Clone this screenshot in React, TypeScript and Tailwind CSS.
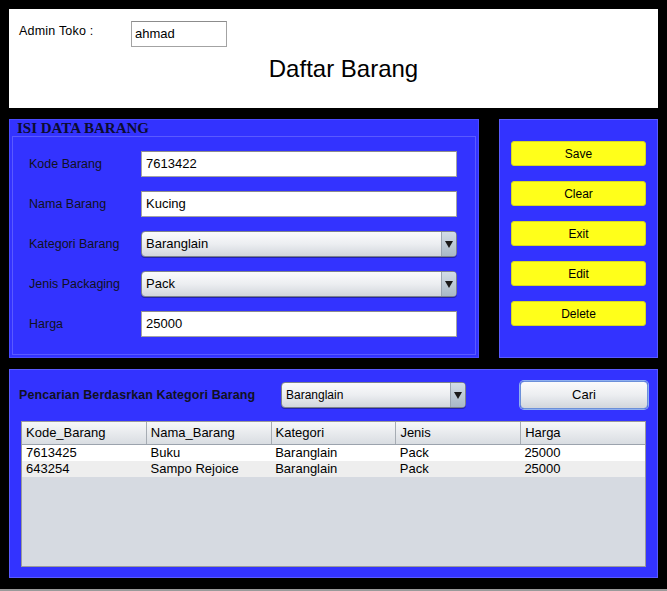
import React from 'react';

const sans = "font-['Liberation_Sans',Arial,sans-serif]";

function TextField({ value, className = '' }: { value: string; className?: string }) {
  return (
    <div
      className={`h-[26px] bg-white border border-[#a3a3a3] border-t-[#8c8c8c] flex items-center px-[4px] text-[13px] text-black ${className}`}
    >
      {value}
    </div>
  );
}

function Combo({ value, className = '', small = false }: { value: string; className?: string; small?: boolean }) {
  return (
    <div
      className={`h-[26px] shrink-0 flex rounded-[4px] border border-[#7d838c] overflow-hidden bg-gradient-to-b from-[#fbfbfc] via-[#eceef1] to-[#d2d6dc] shadow-[0_1px_0_#2222aa] ${className}`}
    >
      <div className={`flex-1 flex items-center px-[4px] text-black ${small ? 'text-[12px]' : 'text-[13px]'}`}>{value}</div>
      <div className="w-[15px] flex items-center justify-center border-l border-[#9aa5b1] bg-gradient-to-b from-[#d3dde7] to-[#a9b8c6]">
        <svg width="8" height="7" viewBox="0 0 8 7">
          <path d="M0 0 H8 L4 7 Z" fill="#1a1a1a" />
        </svg>
      </div>
    </div>
  );
}

function YellowButton({ label }: { label: string }) {
  return (
    <div className="h-[25px] w-[135px] rounded-[3px] bg-[#ffff1a] border border-[#d8d820] flex items-center justify-center text-[12px] leading-[14px] pt-[1px] text-black">
      {label}
    </div>
  );
}

const rows = [
  ['7613425', 'Buku', 'Baranglain', 'Pack', '25000'],
  ['643254', 'Sampo Rejoice', 'Baranglain', 'Pack', '25000'],
];

const headers = ['Kode_Barang', 'Nama_Barang', 'Kategori', 'Jenis', 'Harga'];

const fields: { label: string; value: string; combo?: boolean }[] = [
  { label: 'Kode Barang', value: '7613422' },
  { label: 'Nama Barang', value: 'Kucing' },
  { label: 'Kategori Barang', value: 'Baranglain', combo: true },
  { label: 'Jenis Packaging', value: 'Pack', combo: true },
  { label: 'Harga', value: '25000' },
];

export default function App() {
  return (
    <div className={`w-[667px] h-[591px] bg-black flex flex-col ${sans}`}>
      <div className="px-[9px] pt-[9px] flex flex-col gap-[11px]">
        {/* header */}
        <div className="h-[99px] bg-white flex flex-col">
          <div className="flex items-start pt-[12px]">
            <div className="ml-[10px] mt-[1px] text-[12.5px] text-black w-[112px] tracking-[0.2px]">Admin Toko :</div>
            <div className="h-[26px] w-[96px] border border-[#a3a3a3] border-t-[#8c8c8c] flex items-center px-[3px] text-[13px] text-black">
              ahmad
            </div>
          </div>
          <div className="text-[24px] text-black text-center mt-[8px] pl-[20px] leading-[28px]">Daftar Barang</div>
        </div>

        {/* form + buttons */}
        <div className="h-[239px] flex gap-[20px]">
          <div className="w-[470px] bg-[#3333ff] border border-[#4b4bff] flex flex-col px-[2px] pb-[2px]">
            <div className="h-[16px] pl-[5px] font-['Liberation_Serif',serif] font-bold text-[15px] leading-[17px] text-[#0c0c30]">
              ISI DATA BARANG
            </div>
            <div className="flex-1 border border-[#5a5aff] flex flex-col gap-[14px] pt-[14px] pl-[16px]">
              {fields.map((f) => (
                <div key={f.label} className="flex items-center h-[26px]">
                  <div className="w-[112px] text-[12.5px] text-[#111122]">{f.label}</div>
                  {f.combo ? (
                    <Combo value={f.value} className="w-[316px]" />
                  ) : (
                    <TextField value={f.value} className="w-[316px]" />
                  )}
                </div>
              ))}
            </div>
          </div>
          <div className="w-[159px] bg-[#3333ff] border border-[#5a5aff] flex flex-col gap-[15px] pt-[21px] pl-[11px]">
            {['Save', 'Clear', 'Exit', 'Edit', 'Delete'].map((b) => (
              <YellowButton key={b} label={b} />
            ))}
          </div>
        </div>

        {/* search */}
        <div className="h-[209px] bg-[#3333ff] border border-[#5a5aff] flex flex-col pl-[9px]">
          <div className="flex items-center h-[40px] pt-[10px]">
            <div className="w-[262px] shrink-0 text-[12.5px] font-bold text-[#111122] pt-[1px] tracking-[0.1px]">Pencarian Berdasrkan Kategori Barang</div>
            <Combo value="Baranglain" small className="w-[185px]" />
            <div className="ml-[54px] shrink-0 h-[28px] w-[128px] rounded-[4px] border border-[#6b8fd9] shadow-[0_0_0_1px_#8fb0f0] bg-gradient-to-b from-[#fbfbfc] via-[#eceef1] to-[#d2d6dc] flex items-center justify-center text-[13px] text-black">
              Cari
            </div>
          </div>
          <div className="mt-[11px] ml-[2px] h-[146px] w-[625px] bg-[#d6dae1] border border-[#9a9a9a] flex flex-col">
            <div className="h-[23px] flex border-b border-[#9ba3ad] bg-gradient-to-b from-[#f7f8f9] to-[#d9dde2]">
              {headers.map((h, i) => (
                <div
                  key={h}
                  className={`flex-1 flex items-center px-[4px] text-[13px] text-black ${i < 4 ? 'border-r border-[#a6acb3]' : ''}`}
                >
                  {h}
                </div>
              ))}
            </div>
            {rows.map((r, ri) => (
              <div key={ri} className={`h-[16px] flex ${ri === 0 ? 'bg-white' : 'bg-[#eeeeee]'}`}>
                {r.map((c, ci) => (
                  <div key={ci} className="flex-1 flex items-center px-[4px] text-[13px] leading-[16px] text-black">
                    {c}
                  </div>
                ))}
              </div>
            ))}
          </div>
        </div>
      </div>
      <div className="mt-auto h-[2px] bg-[#9a9a9a]" />
    </div>
  );
}
